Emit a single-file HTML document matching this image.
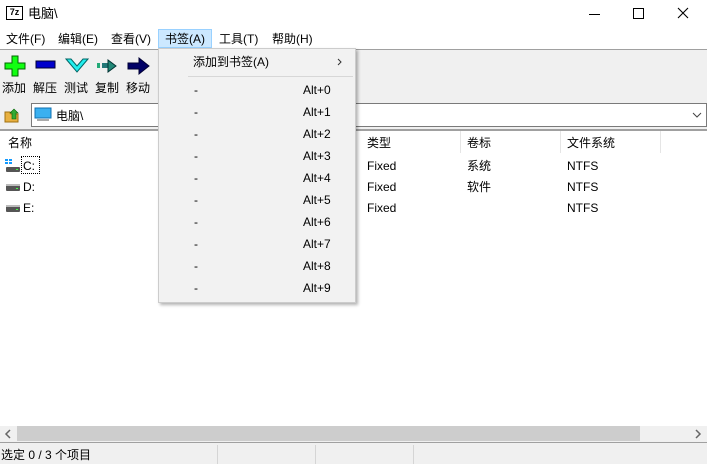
<!DOCTYPE html>
<html><head><meta charset="utf-8"><style>
*{margin:0;padding:0;box-sizing:border-box}
body{width:707px;height:464px;overflow:hidden;background:#fff;font-family:"Liberation Sans","Noto Sans CJK SC",sans-serif;font-size:12px;color:#000;position:relative}
.a{position:absolute;white-space:nowrap;line-height:16px}
</style></head><body>
<div class="a" style="left:6px;top:6px;width:17px;height:14px;border:1.5px solid #000;font:bold 9px 'Liberation Sans';line-height:11px;text-align:center">7z</div>
<div class="a" style="left:28px;top:6px;font-size:13px">电脑\</div>
<div class="a" style="left:589px;top:14px;width:11px;height:1px;background:#000"></div>
<div class="a" style="left:633px;top:8px;width:11px;height:11px;border:1px solid #000"></div>
<svg class="a" style="left:677px;top:7px" width="12" height="12"><path d="M1 1L11 11M11 1L1 11" stroke="#000" stroke-width="1.1"/></svg>
<div class="a" style="left:158px;top:29px;width:54px;height:19px;background:#cce8ff;border:1px solid #99d1ff"></div>
<div class="a" style="left:6px;top:31px">文件(F)</div>
<div class="a" style="left:58px;top:31px">编辑(E)</div>
<div class="a" style="left:111px;top:31px">查看(V)</div>
<div class="a" style="left:165px;top:31px">书签(A)</div>
<div class="a" style="left:219px;top:31px">工具(T)</div>
<div class="a" style="left:272px;top:31px">帮助(H)</div>
<div class="a" style="left:0;top:49px;width:707px;height:52px;background:#f0f0f0;border-top:1px solid #a0a0a0"></div>
<svg class="a" style="left:4px;top:55px" width="22" height="22"><path d="M8 1h6v7h7v6h-7v7h-6v-7h-7v-6h7z" fill="#1f1" stroke="#060" stroke-width="1"/></svg>
<svg class="a" style="left:35px;top:60px" width="22" height="10"><rect x="1" y="1" width="19" height="7" fill="#00c" stroke="#003"/></svg>
<svg class="a" style="left:65px;top:58px" width="24" height="16"><path d="M1 1L12 14L23 1L18 1L12 8L6 1Z" fill="#2ee" stroke="#066"/></svg>
<svg class="a" style="left:96px;top:56px" width="24" height="20"><rect x="1" y="7" width="3" height="5" fill="#2a7"/><rect x="6" y="7" width="6" height="5" fill="#277" /><path d="M12 4L12 16L20 10Z" fill="#287" stroke="#033"/></svg>
<svg class="a" style="left:127px;top:56px" width="24" height="20"><path d="M1 7h11v-5l10 8l-10 8v-5h-11z" fill="#006" stroke="#003"/></svg>
<div class="a" style="left:2px;top:80px">添加</div>
<div class="a" style="left:33px;top:80px">解压</div>
<div class="a" style="left:64px;top:80px">测试</div>
<div class="a" style="left:95px;top:80px">复制</div>
<div class="a" style="left:126px;top:80px">移动</div>
<div class="a" style="left:0;top:101px;width:707px;height:29px;background:#f0f0f0"></div>
<svg class="a" style="left:4px;top:107px" width="16" height="16"><path d="M1 5h5l1 2h7v8h-13z" fill="#e8b040" stroke="#a07010"/><path d="M8 12v-6h-2l4-4l4 4h-2v6z" fill="#3a3" stroke="#060" stroke-width=".6"/></svg>
<div class="a" style="left:31px;top:103px;width:676px;height:24px;background:#fff;border:1px solid #7a7a7a"></div>
<svg class="a" style="left:34px;top:107px" width="18" height="16"><rect x="1" y="1" width="16" height="10" fill="#3ab0f0" stroke="#1070b0"/><rect x="3" y="12" width="12" height="2" fill="#aaa"/></svg>
<div class="a" style="left:56px;top:108px">电脑\</div>
<svg class="a" style="left:692px;top:112px" width="10" height="6"><path d="M1 1l4 4l4-4" stroke="#444" fill="none"/></svg>
<div class="a" style="left:0;top:129px;width:707px;height:2px;background:#a0a0a0"></div>
<div class="a" style="left:8px;top:135px">名称</div>
<div class="a" style="left:367px;top:135px">类型</div>
<div class="a" style="left:467px;top:135px">卷标</div>
<div class="a" style="left:567px;top:135px">文件系统</div>
<div class="a" style="left:460px;top:131px;width:1px;height:22px;background:#e5e5e5"></div>
<div class="a" style="left:560px;top:131px;width:1px;height:22px;background:#e5e5e5"></div>
<div class="a" style="left:660px;top:131px;width:1px;height:22px;background:#e5e5e5"></div>
<svg class="a" style="left:5px;top:159px" width="16" height="14"><rect x="0" y="0" width="3" height="2" fill="#19f"/><rect x="4" y="0" width="3" height="2" fill="#19f"/><rect x="0" y="3" width="3" height="2" fill="#19f"/><rect x="4" y="3" width="3" height="2" fill="#19f"/><rect x="1" y="8" width="14" height="5" rx="1" fill="#555"/><rect x="11" y="10" width="2" height="1" fill="#4f4"/></svg>
<div class="a" style="left:21px;top:156px;width:19px;height:18px;border:1px dotted #000"></div>
<div class="a" style="left:23px;top:158px">C:</div>
<svg class="a" style="left:5px;top:181px" width="16" height="12"><rect x="1" y="4" width="14" height="6" rx="1" fill="#555"/><rect x="1" y="3" width="14" height="2" fill="#bbb"/><rect x="11" y="7" width="2" height="1" fill="#4f4"/></svg>
<div class="a" style="left:23px;top:179px">D:</div>
<svg class="a" style="left:5px;top:202px" width="16" height="12"><rect x="1" y="4" width="14" height="6" rx="1" fill="#555"/><rect x="1" y="3" width="14" height="2" fill="#bbb"/><rect x="11" y="7" width="2" height="1" fill="#4f4"/></svg>
<div class="a" style="left:23px;top:200px">E:</div>
<div class="a" style="left:367px;top:158px">Fixed</div><div class="a" style="left:467px;top:158px">系统</div><div class="a" style="left:567px;top:158px">NTFS</div>
<div class="a" style="left:367px;top:179px">Fixed</div><div class="a" style="left:467px;top:179px">软件</div><div class="a" style="left:567px;top:179px">NTFS</div>
<div class="a" style="left:367px;top:200px">Fixed</div><div class="a" style="left:567px;top:200px">NTFS</div>
<div class="a" style="left:0;top:426px;width:707px;height:16px;background:#f0f0f0"></div>
<div class="a" style="left:17px;top:426px;width:623px;height:15px;background:#cdcdcd"></div>
<svg class="a" style="left:4px;top:429px" width="8" height="10"><path d="M6 1l-4 4l4 4" stroke="#666" fill="none" stroke-width="1.5"/></svg>
<svg class="a" style="left:694px;top:429px" width="8" height="10"><path d="M2 1l4 4l-4 4" stroke="#666" fill="none" stroke-width="1.5"/></svg>
<div class="a" style="left:0;top:442px;width:707px;height:22px;background:#f0f0f0;border-top:1px solid #a0a0a0"></div>
<div class="a" style="left:217px;top:445px;width:1px;height:19px;background:#d5d5d5"></div>
<div class="a" style="left:315px;top:445px;width:1px;height:19px;background:#d5d5d5"></div>
<div class="a" style="left:413px;top:445px;width:1px;height:19px;background:#d5d5d5"></div>
<div class="a" style="left:1px;top:447px">选定 0 / 3 个项目</div>
<div class="a" style="left:158px;top:48px;width:198px;height:255px;background:#f2f2f2;border:1px solid #ccc;box-shadow:2px 2px 3px rgba(0,0,0,.3)"></div>
<div class="a" style="left:193px;top:54px">添加到书签(A)</div>
<svg class="a" style="left:337px;top:58px" width="6" height="8"><path d="M1 1l3 3l-3 3" stroke="#333" fill="none"/></svg>
<div class="a" style="left:188px;top:76px;width:165px;height:1px;background:#d7d7d7"></div>
<div id="m"></div>
<script>
var h='';for(var i=0;i<10;i++){var t=82+i*22;h+='<div class="a" style="left:194px;top:'+t+'px">-</div><div class="a" style="left:303px;top:'+t+'px">Alt+'+i+'</div>';}
document.getElementById('m').outerHTML=h;
</script>
</body></html>
